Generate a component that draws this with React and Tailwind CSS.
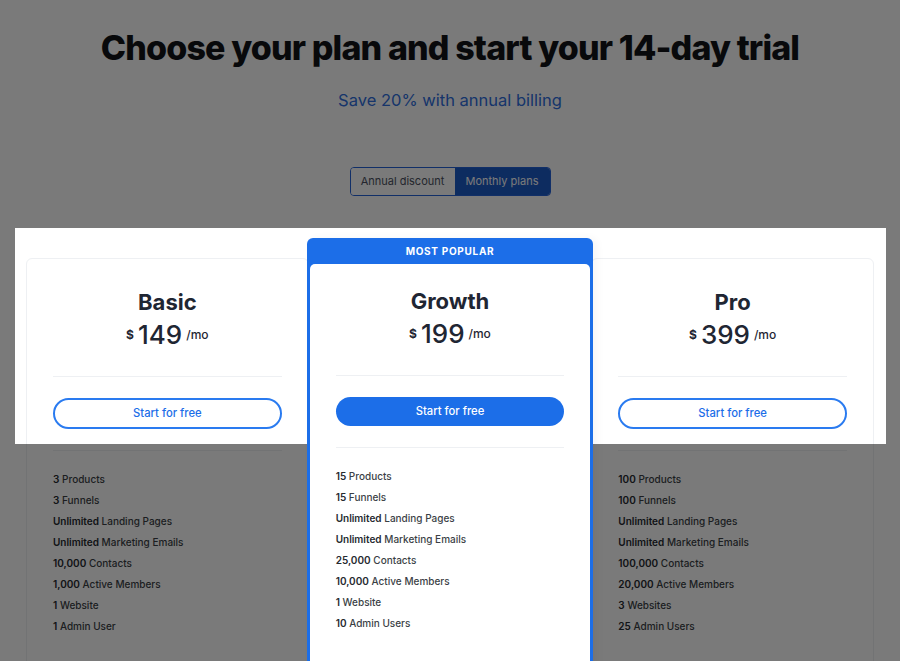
import React from 'react'

const plans = [
  {
    name: 'Basic',
    price: '149',
    features: [
      ['3', 'Products'],
      ['3', 'Funnels'],
      ['Unlimited', 'Landing Pages'],
      ['Unlimited', 'Marketing Emails'],
      ['10,000', 'Contacts'],
      ['1,000', 'Active Members'],
      ['1', 'Website'],
      ['1', 'Admin User'],
    ],
  },
  {
    name: 'Growth',
    price: '199',
    popular: true,
    features: [
      ['15', 'Products'],
      ['15', 'Funnels'],
      ['Unlimited', 'Landing Pages'],
      ['Unlimited', 'Marketing Emails'],
      ['25,000', 'Contacts'],
      ['10,000', 'Active Members'],
      ['1', 'Website'],
      ['10', 'Admin Users'],
    ],
  },
  {
    name: 'Pro',
    price: '399',
    features: [
      ['100', 'Products'],
      ['100', 'Funnels'],
      ['Unlimited', 'Landing Pages'],
      ['Unlimited', 'Marketing Emails'],
      ['100,000', 'Contacts'],
      ['20,000', 'Active Members'],
      ['3', 'Websites'],
      ['25', 'Admin Users'],
    ],
  },
]

function PlanBody({ plan }) {
  return (
    <div className="px-[26px]">
      <h2 className="text-center text-[22px] font-bold text-[#1f2633] leading-8">{plan.name}</h2>
      <div className="mt-1 flex items-center justify-center gap-1 text-[#1f2633]">
        <span className="text-xs font-bold">$</span>
        <span className="text-[26px] leading-[26px] font-medium">{plan.price}</span>
        <span className="text-xs font-medium">/mo</span>
      </div>
      <div className="mt-7 h-px bg-[#eef0f3]" />
      <button
        className={
          plan.popular
            ? 'mt-[21px] h-[29px] w-full rounded-full bg-[#1c6ee8] text-[11.25px] font-medium text-white'
            : 'mt-[21px] h-[31px] w-full rounded-full border-2 border-[#2a7bf0] bg-white text-[11.25px] font-medium text-[#1c6ee8]'
        }
      >
        Start for free
      </button>
      <div className="mt-[21px] h-px bg-[#eef0f3]" />
      <ul className="mt-[18px] pb-10">
        {plan.features.map(([lead, rest]) => (
          <li key={lead + rest} className="text-[10px] leading-[21px] font-medium text-[#3b3f46]">
            <span className="font-semibold text-[#262a30]">{lead}</span> {rest}
          </li>
        ))}
      </ul>
    </div>
  )
}

export default function App() {
  return (
    <div className="relative h-[661px] w-full overflow-hidden bg-white font-['Inter',sans-serif]">
      {/* header */}
      <div className="pt-7 text-center">
        <h1 className="text-[34px] leading-10 font-extrabold tracking-tight text-[#111318]">
          Choose your plan and start your 14-day trial
        </h1>
        <p className="mt-[18px] text-[16.5px] leading-7 text-[#2f6fe0]">Save 20% with annual billing</p>
      </div>

      <div className="mt-[53px] flex justify-center">
        <div className="flex h-[29px] overflow-hidden rounded border border-[#2563d9] text-[11px]">
          <button className="w-[104px] bg-white text-[#4b5160]">Annual discount</button>
          <button className="w-[95px] bg-[#1d5cc9] text-white">Monthly plans</button>
        </div>
      </div>

      {/* cards */}
      <div className="mx-auto mt-[42px] grid w-[848px] grid-cols-3 items-start">
        <div className="mt-5 rounded-md border border-[#eef0f3] pt-[27px]">
          <PlanBody plan={plans[0]} />
        </div>
        <div className="relative z-10 -mx-[2px] rounded-t-md bg-[#1c6ee8] px-[3px] shadow-[4px_0_8px_rgba(0,0,0,0.04)]">
          <div className="flex h-[26px] items-center justify-center text-[10px] font-bold tracking-[0.07em] text-white">
            MOST POPULAR
          </div>
          <div className="rounded-t-[5px] bg-white pt-[21px]">
            <PlanBody plan={plans[1]} />
          </div>
        </div>
        <div className="mt-5 rounded-md border border-[#eef0f3] pt-[27px]">
          <PlanBody plan={plans[2]} />
        </div>
      </div>

      {/* tour spotlight */}
      <div className="pointer-events-none absolute left-[15px] top-[228px] h-[216px] w-[871px] shadow-[0_0_0_2000px_rgba(0,0,0,0.52)]" />
    </div>
  )
}
